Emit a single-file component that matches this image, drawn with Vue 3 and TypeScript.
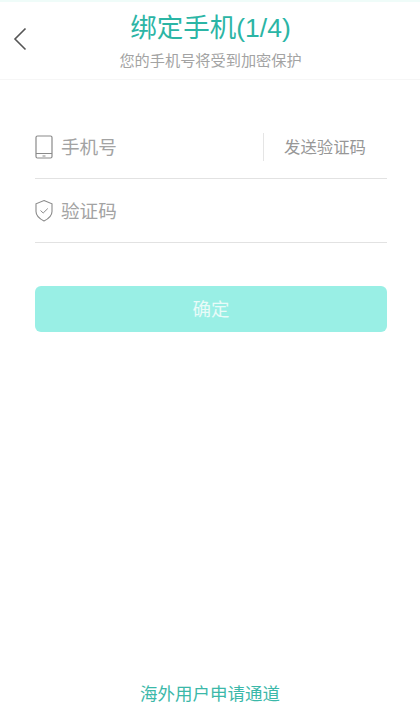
<script setup lang="ts">
const title = '绑定手机(1/4)'
</script>

<template>
  <div class="page">
    <div class="status"></div>
    <header class="header">
      <button class="back" aria-label="返回">
        <svg width="14" height="24" viewBox="0 0 14 24"><path d="M12.5 1.5 L2 12 L12.5 22.5" fill="none" stroke="#555" stroke-width="1.6"/></svg>
      </button>
      <h1 class="title">{{ title }}</h1>
      <p class="sub">您的手机号将受到加密保护</p>
    </header>
    <main class="form">
      <div class="row first">
        <svg class="icon" width="18" height="24" viewBox="0 0 18 24"><rect x="1" y="1" width="16" height="22" rx="1.5" fill="none" stroke="#8a8a8a" stroke-width="1.2"/><path d="M1 18.5H17M7.5 21H10.5" stroke="#8a8a8a" stroke-width="1.1" fill="none"/></svg>
        <span class="ph">手机号</span>
        <span class="send">发送验证码</span>
      </div>
      <div class="row second">
        <svg class="icon" width="18" height="23" viewBox="0 0 18 23"><path d="M9 1.5 L17 4.8 V12.5 C17 17 13 20 9 22 C5 20 1 17 1 12.5 V4.8 Z" fill="none" stroke="#8a8a8a" stroke-width="1.1"/><path d="M5.5 11.5 L8.2 14 L12.8 9.5" fill="none" stroke="#8a8a8a" stroke-width="1"/></svg>
        <span class="ph">验证码</span>
      </div>
      <button class="confirm">确定</button>
    </main>
    <footer class="foot">海外用户申请通道</footer>
  </div>
</template>

<style scoped>
.page {
  width: 420px;
  height: 720px;
  display: flex;
  flex-direction: column;
  background: #fff;
  font-family: "Noto Sans CJK SC", "Liberation Sans", sans-serif;
}
.status { height: 2px; background: #effcf9; }
.header {
  position: relative;
  height: 77px;
  border-bottom: 1px solid #f6f6f6;
  text-align: center;
}
.back {
  position: absolute;
  left: 13px;
  top: 25px;
  padding: 0;
  border: 0;
  background: none;
  line-height: 0;
}
.title {
  margin: 7px 0 0;
  padding-left: 1px;
  font-size: 26.5px;
  line-height: 38px;
  font-weight: 400;
  color: #2bb5a5;
  font-family: "Liberation Sans", "Noto Sans CJK SC", sans-serif;
}
.sub {
  margin: 1px 0 0;
  padding-left: 1px;
  font-size: 15.2px;
  line-height: 22px;
  color: #a3a3a3;
}
.form {
  flex: 1;
  padding: 35px 33px 0 35px;
  display: flex;
  flex-direction: column;
}
.row {
  display: flex;
  align-items: center;
  box-sizing: border-box;
  height: 64px;
  border-bottom: 1px solid #e2e2e2;
}
.icon { flex: none; }
.ph {
  margin-left: 8px;
  padding-bottom: 2px;
  font-size: 18.6px;
  color: #a3a3a3;
  flex: 1;
}
.send {
  width: 124px;
  box-sizing: border-box;
  border-left: 1px solid #e5e5e5;
  padding-left: 20px;
  height: 28px;
  line-height: 27px;
  font-size: 16.4px;
  color: #979797;
}
.confirm {
  margin-top: 43px;
  height: 46px;
  padding: 0 0 2px;
  border: 0;
  border-radius: 6px;
  background: #99efe5;
  color: #e8fbf8;
  font-size: 18.5px;
  font-family: inherit;
}
.foot {
  height: 53px;
  text-align: center;
  font-size: 17.5px;
  line-height: 51px;
  color: #3bb8a9;
}
</style>

<style>
html, body { margin: 0; background: #fff; }
</style>
